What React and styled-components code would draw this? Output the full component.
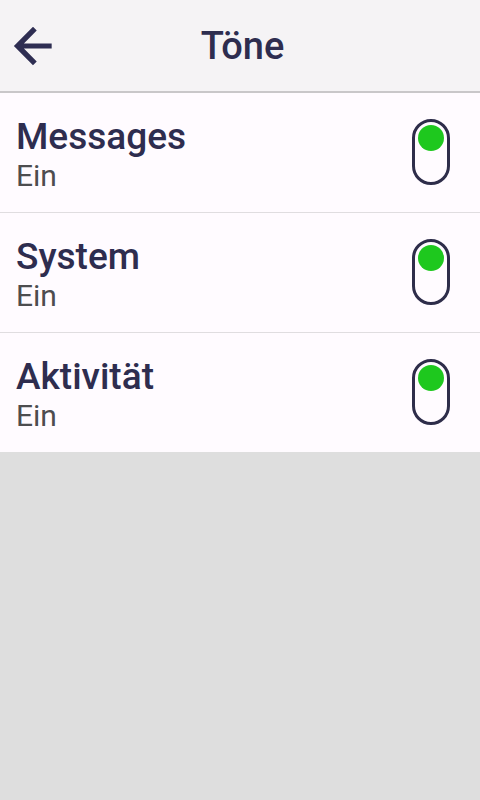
import React from 'react';
import styled, { createGlobalStyle } from 'styled-components';

const GlobalStyle = createGlobalStyle`
  html, body {
    margin: 0;
    padding: 0;
    background: #dedede;
    font-family: Roboto, "Noto Sans", sans-serif;
  }
`;

const Screen = styled.div`
  width: 480px;
  min-height: 800px;
  background: #dedede;
`;

const Header = styled.header`
  height: 91px;
  background: #f5f3f5;
  border-bottom: 2px solid #c9c7c9;
  display: grid;
  grid-template-columns: 70px 1fr 70px;
  align-items: center;
`;

const BackButton = styled.button`
  border: none;
  background: none;
  padding: 0 0 0 5px;
  margin: 0;
  display: flex;
  align-items: center;
  color: #2e2d52;
  cursor: pointer;
`;

const Title = styled.h1`
  margin: 0;
  padding-left: 5px;
  text-align: center;
  font-size: 38px;
  font-weight: 500;
  color: #2e2d4f;
  line-height: 44px;
`;

const List = styled.div`
  background: #fffbff;
`;

const Row = styled.div`
  box-sizing: border-box;
  display: flex;
  align-items: center;
  justify-content: space-between;
  padding: 0 30px 0 16px;
  border-top: ${p => (p.first ? 'none' : '1px solid #e0dde0')};
  height: ${p => (p.first ? '119px' : '120px')};
`;

const Labels = styled.div`
  display: flex;
  flex-direction: column;
  margin-top: 6px;
`;

const Name = styled.div`
  font-size: 37px;
  font-weight: 500;
  line-height: 40px;
  color: #2e2d4f;
`;

const State = styled.div`
  font-size: 30px;
  line-height: 38px;
  color: #4d4d4f;
`;

const Toggle = styled.div`
  width: 38px;
  height: 66px;
  box-sizing: border-box;
  border: 3px solid #2e2d4a;
  border-radius: 19px;
  display: flex;
  flex-direction: column;
  align-items: center;
  justify-content: ${p => (p.on ? 'flex-start' : 'flex-end')};
  padding: 3px 0;
  margin-top: -2px;
`;

const Knob = styled.div`
  width: 26px;
  height: 26px;
  border-radius: 50%;
  background: ${p => (p.on ? '#1ec81e' : '#9a9a9a')};
`;

const items = [
  { name: 'Messages', on: true },
  { name: 'System', on: true },
  { name: 'Aktivität', on: true },
];

export default function App() {
  return (
    <Screen>
      <GlobalStyle />
      <Header>
        <BackButton aria-label="Zurück">
          <svg width="56" height="56" viewBox="0 0 24 24" fill="currentColor">
            <path d="M20 10.9H8.1l5.5-5.5L12 3.8l-8.2 8.2 8.2 8.2 1.6-1.6-5.5-5.5H20v-2.2z" />
          </svg>
        </BackButton>
        <Title>Töne</Title>
        <div />
      </Header>
      <List>
        {items.map((item, i) => (
          <Row key={item.name} first={i === 0}>
            <Labels>
              <Name>{item.name}</Name>
              <State>{item.on ? 'Ein' : 'Aus'}</State>
            </Labels>
            <Toggle on={item.on}>
              <Knob on={item.on} />
            </Toggle>
          </Row>
        ))}
      </List>
    </Screen>
  );
}
